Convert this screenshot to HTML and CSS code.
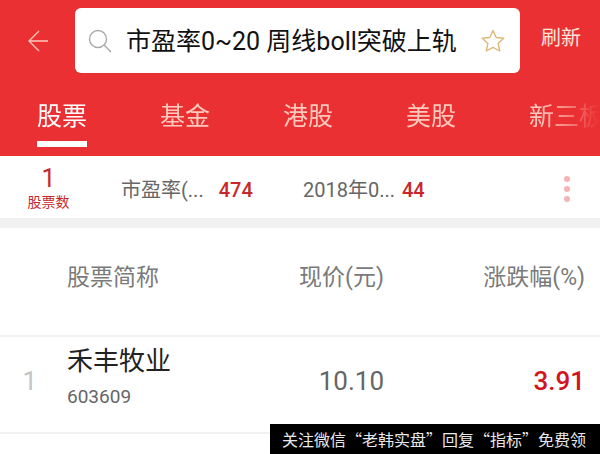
FILE: index.html
```
<!DOCTYPE html>
<html lang="zh-CN">
<head>
  <meta charset="UTF-8" />
  <meta name="viewport" content="width=device-width, initial-scale=1.0"/>
  <title>股票搜索</title>
  <link rel="stylesheet" href="styles.css">
</head>
<body>
  <header>
    <div class="topbar">
      <button class="back" type="button" aria-label="返回">
        <svg width="20" height="22" viewBox="0 0 20 22" fill="none" stroke="#ffc9bd" stroke-width="1.3"><path d="M11 1L1 11l10 10M1 11h19"/></svg>
      </button>
      <form class="search">
        <svg width="24" height="24" viewBox="0 0 24 24" fill="none" stroke="#aaa" stroke-width="1.4"><circle cx="10" cy="10" r="8.5"/><path d="M16 16l7 7"/></svg>
        <input type="text" aria-label="搜索" value="市盈率0~20 周线boll突破上轨">
        <button class="star" type="button" aria-label="收藏">
          <svg width="24" height="24" viewBox="0 0 24 24" fill="none" stroke="#dfb878" stroke-width="1.4" stroke-linejoin="round"><path d="M12 1.5l3.2 7 7.6.8-5.7 5.1 1.7 7.6-6.8-3.6L5.200 22l1.700-7.600L1.200 9.300l7.600-.8z"/></svg>
        </button>
      </form>
      <button class="refresh" type="button">刷新</button>
    </div>
    <nav class="tabs">
      <a href="#" class="active">股票</a>
      <a href="#">基金</a>
      <a href="#">港股</a>
      <a href="#">美股</a>
      <a href="#">新三板</a>
    </nav>
  </header>

  <section class="summary">
    <div class="count"><strong>1</strong><span>股票数</span></div>
    <div class="filter first">市盈率(... <b>474</b></div>
    <div class="filter">2018年0... <b>44</b></div>
    <button class="more" type="button" aria-label="更多">
      <svg width="6" height="28" viewBox="0 0 6 28" fill="#f6b3b5"><circle cx="3" cy="4" r="3"/><circle cx="3" cy="14" r="3"/><circle cx="3" cy="24" r="3"/></svg>
    </button>
  </section>

  <table>
    <thead>
      <tr>
        <th class="num"></th>
        <th class="name">股票简称</th>
        <th class="price">现价(元)</th>
        <th class="change">涨跌幅(%)</th>
      </tr>
    </thead>
    <tbody>
      <tr>
        <td class="num">1</td>
        <td class="name">禾丰牧业<small>603609</small></td>
        <td class="price">10.10</td>
        <td class="change">3.91</td>
      </tr>
    </tbody>
  </table>

  <div class="notice">关注微信“老韩实盘”回复“指标”免费领</div>
</body>
</html>
```

FILE: styles.css
```
* {
  box-sizing: border-box;
}
body {
  margin: 0;
  font-family: Roboto, "Noto Sans CJK SC", sans-serif;
  background: #fff;
  color: #666;
}
button {
  padding: 0;
  border: 0;
  background: none;
  font: inherit;
  cursor: pointer;
}
svg {
  display: block;
}
header {
  background: #ea3032;
  padding-top: 8px;
}
.topbar {
  display: flex;
  align-items: center;
}
.back {
  width: 75px;
  padding-left: 28px;
}
.search {
  flex: 1;
  min-width: 0;
  height: 65px;
  display: flex;
  align-items: center;
  padding: 0 15px 0 13px;
  background: #fff;
  border-radius: 6px;
}
.search input {
  flex: 1;
  min-width: 0;
  height: 40px;
  margin-left: 14px;
  padding: 0 0 4px;
  border: 0;
  outline: 0;
  font: inherit;
  font-size: 25px;
  color: #111;
}
.refresh {
  width: 80px;
  padding: 0 0 6px 2px;
  font-size: 20px;
  line-height: 28px;
  color: #ffe6dd;
}
.tabs {
  display: flex;
  gap: 73px;
  height: 83px;
  padding: 26px 0 0 37px;
  overflow: hidden;
  -webkit-mask-image: linear-gradient(to left, transparent, #000 60px);
  mask-image: linear-gradient(to left, transparent, #000 60px);
}
.tabs a {
  flex: none;
  height: 48px;
  font-size: 25px;
  line-height: 36px;
  color: #ffc9bd;
  text-decoration: none;
}
.tabs .active {
  color: #fff;
  border-bottom: 6px solid #fff;
}
.summary {
  display: flex;
  align-items: center;
  height: 72px;
  padding-top: 3px;
  border-bottom: 10px solid #f1f1f1;
  font-size: 20px;
}
.count {
  width: 97px;
  text-align: center;
  color: #c8282c;
}
.count strong {
  display: block;
  font-size: 25px;
  font-weight: 400;
  line-height: 26px;
}
.count span {
  display: block;
  font-size: 14px;
  line-height: 20px;
}
.filter {
  white-space: nowrap;
}
.filter b {
  margin-left: 2px;
  font-weight: 500;
  color: #c8282c;
}
.first {
  width: 182px;
  margin-left: 24px;
}
.first b {
  margin-left: 10px;
}
.more {
  margin: 0 30px 0 auto;
}
table {
  width: 100%;
  border-collapse: collapse;
  table-layout: fixed;
}
th, td {
  padding: 0;
  border-bottom: 2px solid #f1f1f1;
  font-weight: 400;
  text-align: right;
}
th {
  height: 108px;
  padding-bottom: 14px;
  font-size: 23px;
  color: #7a7a7a;
}
td {
  height: 97px;
  padding-bottom: 8px;
  font-size: 26px;
}
.num {
  width: 67px;
}
td.num {
  padding-right: 30px;
  color: #c4c4c4;
}
.name {
  text-align: left;
}
td.name {
  padding-bottom: 14px;
  line-height: 38px;
  color: #222;
}
.name small {
  display: block;
  font-size: 19px;
  line-height: 34px;
  color: #666;
}
.price {
  width: 170px;
}
.change {
  width: 216px;
  padding-right: 15px;
}
td.change {
  color: #d2141e;
  font-weight: 500;
}
.notice {
  position: fixed;
  right: 0;
  bottom: 0;
  padding: 0 14px 0 12px;
  background: #000;
  color: #e8e8e8;
  font: 16px/30px "Noto Sans CJK SC", sans-serif;
}
```
